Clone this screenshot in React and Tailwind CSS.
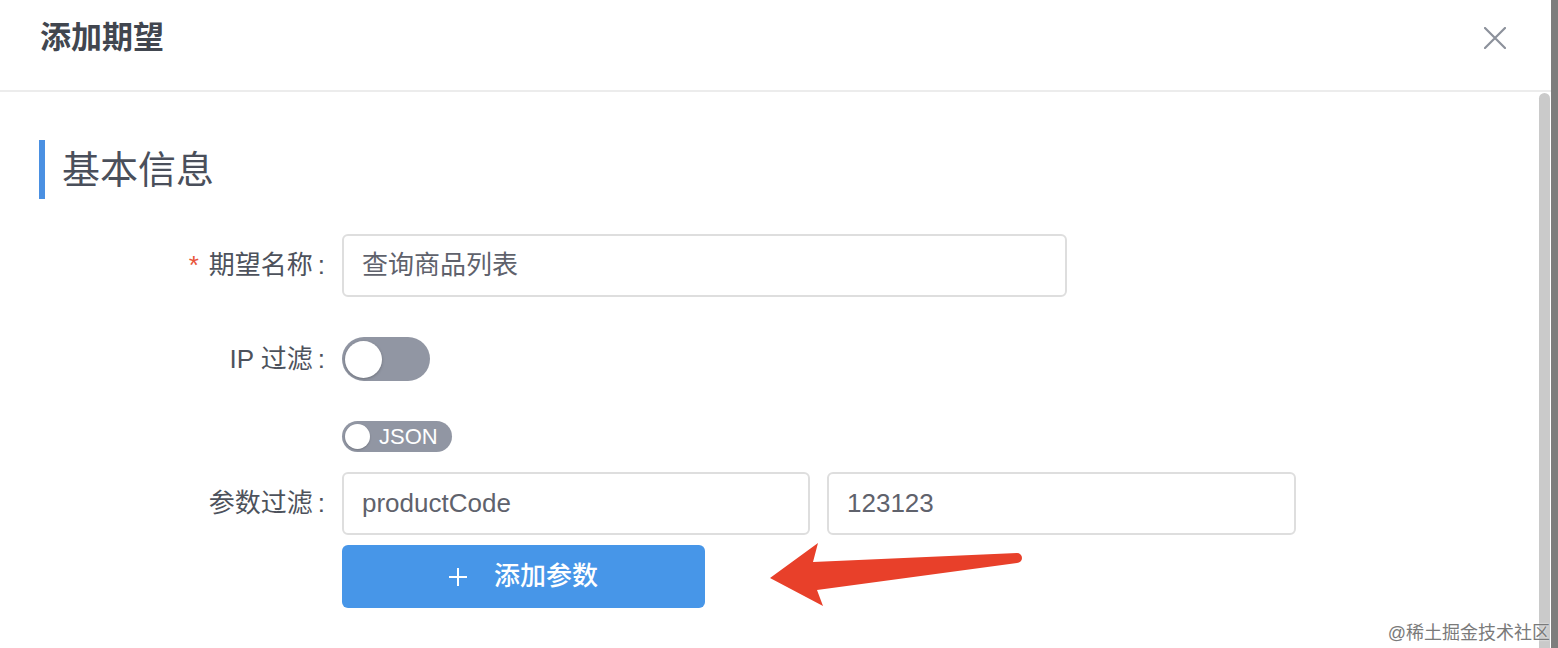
import { useState } from "react";

function Switch({ on, label, big }) {
  if (big) {
    return (
      <div className="flex h-[44px] w-[88px] items-center rounded-full bg-[#9196a3] px-[3px]">
        <div className={`h-[37px] w-[37px] rounded-full bg-white shadow-[0_1px_3px_rgba(0,0,0,0.25)] ${on ? "ml-auto" : ""}`} />
      </div>
    );
  }
  return (
    <div className="flex h-[31px] w-[110px] items-center rounded-full bg-[#9196a3] pl-[3px]">
      <div className="h-[25px] w-[25px] rounded-full bg-white shadow-[0_1px_2px_rgba(0,0,0,0.2)]" />
      <span className="ml-[9px] text-[22px] leading-none text-white">{label}</span>
    </div>
  );
}

function Field({ value, width }) {
  return (
    <div
      className={`flex h-[63px] ${width} items-center rounded-[6px] border-2 border-[#dedede] bg-white px-[18px] text-[26px] text-[#5f626c]`}
    >
      {value}
    </div>
  );
}

function Row({ label, required, className = "", children }) {
  return (
    <div className={`flex items-center ${className}`}>
      <div className="flex w-[342px] shrink-0 justify-end pr-[17px] text-[26px] text-[#4d525c]">
        {required && <span className="mr-[10px] text-[#e8553a]">*</span>}
        <span>{label}</span>
        <span className="ml-[5px]">:</span>
      </div>
      {children}
    </div>
  );
}

export default function App() {
  const [ipFilter] = useState(false);

  return (
    <div className="relative flex h-[648px] w-[1558px] overflow-hidden bg-white font-['Liberation_Sans','Noto_Sans_CJK_SC',sans-serif]">
      <div className="flex min-w-0 flex-1 flex-col">
        <header className="flex h-[90px] shrink-0 items-start justify-between pl-[40px] pr-[45px] pt-[15px]">
          <h1 className="text-[31px] font-bold leading-[45px] text-[#41464f]">添加期望</h1>
          <svg width="22" height="22" viewBox="0 0 22 22" className="mt-[12px]">
            <path d="M1 1 21 21M21 1 1 21" stroke="#8c919b" strokeWidth="2.2" strokeLinecap="round" />
          </svg>
        </header>
        <div className="h-[2px] shrink-0 bg-[#ececec]" />

        <div className="flex min-h-0 flex-1">
          <main className="flex-1">
            <div className="ml-[39px] mt-[48px] flex h-[59px] items-center border-l-[6px] border-[#4a90e2] pl-[17px]">
              <h2 className="text-[38px] leading-none text-[#4a4f5b]">基本信息</h2>
            </div>

            <Row label="期望名称" required className="mt-[35px]">
              <Field value="查询商品列表" width="w-[725px]" />
            </Row>

            <Row label="IP 过滤" className="mt-[40px]">
              <Switch big on={ipFilter} />
            </Row>

            <div className="mt-[40px] pl-[342px]">
              <Switch label="JSON" />
            </div>

            <Row label="参数过滤" className="mt-[20px]">
              <div className="flex gap-[17px]">
                <Field value="productCode" width="w-[468px]" />
                <Field value="123123" width="w-[469px]" />
              </div>
            </Row>

            <div className="mt-[10px] pl-[342px]">
              <button className="flex h-[63px] w-[363px] items-center justify-center gap-[27px] rounded-[6px] bg-[#4796e8] text-[26px] font-medium text-white">
                <svg width="18" height="18" viewBox="0 0 18 18">
                  <path d="M9 0v18M0 9h18" stroke="white" strokeWidth="2" />
                </svg>
                <span>添加参数</span>
              </button>
            </div>
          </main>

          <div className="w-[12px] shrink-0 pr-[1px] pt-[1px]">
            <div className="h-full w-full rounded-t-full bg-[#cacaca]" />
          </div>
        </div>
      </div>
      <div className="w-[7px] shrink-0 bg-[#7d7d7d]" />

      <svg width="290" height="80" viewBox="0 0 290 80" className="absolute left-[750px] top-[535px]">
        <path
          d="M20 43 L68 8 L63 27 L267 18 A5 5 0 0 1 267 28 L67 55 L73 71 Z"
          fill="#e8402a"
          strokeLinejoin="round"
        />
      </svg>

      <div className="absolute bottom-[6px] right-[8px] text-[18px] leading-none text-[#7a7a7a] [text-shadow:0_0_2px_white]">
        @稀土掘金技术社区
      </div>
    </div>
  );
}
